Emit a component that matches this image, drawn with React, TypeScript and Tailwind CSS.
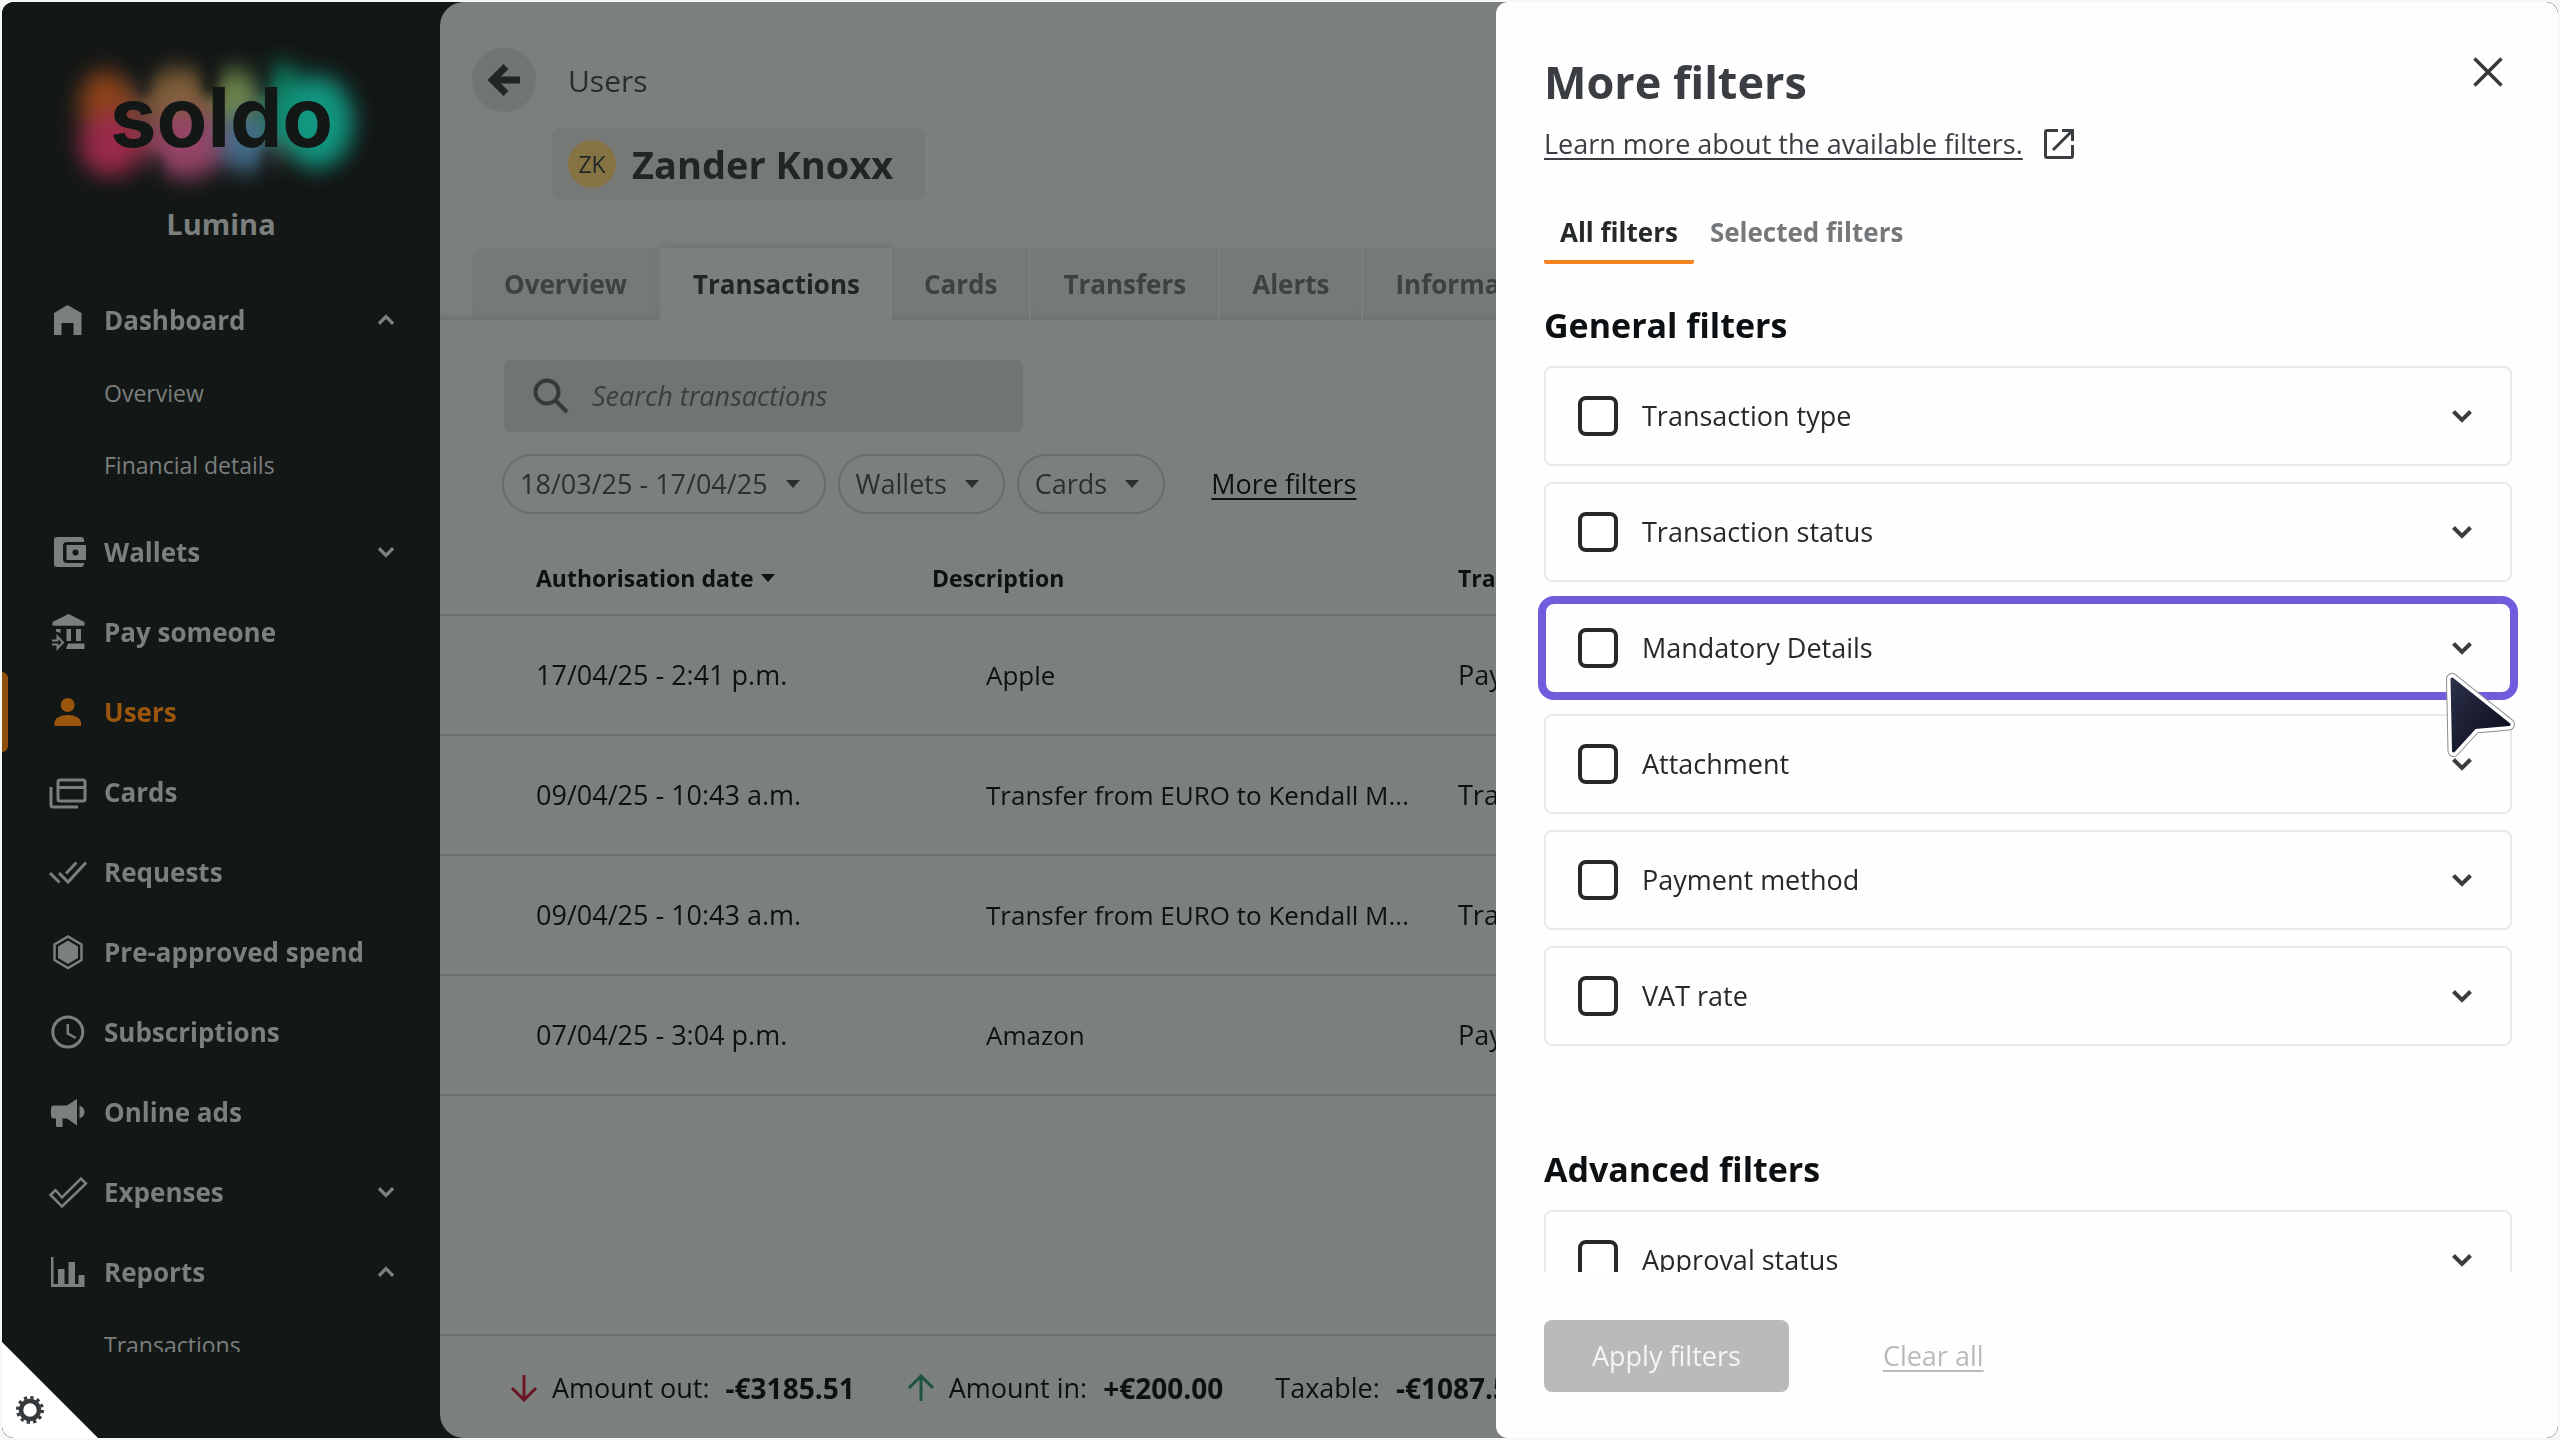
import type { ReactNode } from "react";

function Chevron({ up = false, className }: { up?: boolean; className: string }) {
  return (
    <svg viewBox="0 0 24 16" className={className} fill="none" stroke="currentColor" strokeWidth="4" aria-hidden="true">
      <path d={up ? "M3.500 12.500 12 4l8.500 8.500" : "M3.500 3.500 12 12l8.500-8.500"} />
    </svg>
  );
}

function Caret() {
  return (
    <svg viewBox="0 0 14 8" className="h-2 w-3.5" fill="currentColor" aria-hidden="true">
      <path d="M0 0h14L7 8z" />
    </svg>
  );
}

const icons: Record<string, ReactNode> = {
  home: <path fill="currentColor" d="M7 13 20.500 5l14 8v22h-8V23h-12v12H7z" />,
  wallet: (
    <g fill="currentColor">
      <path d="M10 5h24q3 0 3 3v2H20q-4 0-4 4v13q0 4 4 4h17v1q0 3-3 3H10q-3 0-3-3V8q0-3 3-3z" />
      <path fillRule="evenodd" d="M19.500 13H39v15H19.500zM28.500 17.500a3 3 0 1 0 0 6 3 3 0 0 0 0-6z" />
    </g>
  ),
  bank: (
    <g fill="currentColor">
      <path d="M5.500 10 21.500 2l16 8v3.700h-32zM19.500 17H24v12h-4.500zM29 17h5v12h-5zM9 17h4.500v4L9 19.500zM21 31.500h16.500V37H19z" />
      <path d="M5 28.500h5.500v-4l5.500 6-5.500 6v-4H5" fill="none" stroke="currentColor" strokeWidth="2" />
    </g>
  ),
  user: (
    <g fill="currentColor">
      <circle cx="20.700" cy="13" r="6.900" />
      <path d="M7.500 34v-3c0-5 6-8 13.200-8s13.300 3 13.300 8v3z" />
    </g>
  ),
  cards: (
    <g fill="none" stroke="currentColor" strokeWidth="3">
      <rect x="11" y="8" width="27" height="21" rx="2" />
      <path d="M11 15.500h27M4 15v18q0 2 2 2h25" />
    </g>
  ),
  requests: (
    <path fill="none" stroke="currentColor" strokeWidth="3" d="m3 21 9.500 9.500M12 21l9 9 18-19.500M29.500 10.500 19 21.500" />
  ),
  hexagon: (
    <g>
      <path fill="none" stroke="currentColor" strokeWidth="2.500" d="m21 4.500 13.500 8v15.500L21 36 7.500 28V12.500z" />
      <path fill="currentColor" d="m21 8.500 10 6V26l-10 6-10-6V14.500z" />
    </g>
  ),
  clock: (
    <g fill="none" stroke="currentColor">
      <circle cx="20.800" cy="20" r="15" strokeWidth="3" />
      <path strokeWidth="2.500" d="M20.800 12v9.500l8 4.500" />
    </g>
  ),
  ads: (
    <g fill="currentColor">
      <path d="M7 13.500h13l10-6.500v26.500L20 26.500h-4.500V35H10q-1 0-1-1.500v-7H7q-3 0-3-3v-7q0-3 3-3z" />
      <path d="M32.500 13.500q5 2 5 6.500t-5 6.500z" />
    </g>
  ),
  check: (
    <path fill="none" stroke="currentColor" strokeWidth="2.500" d="m3.500 23 5-5 6.500 7.500L34 6.500l5 5L15 34.500z" />
  ),
  chart: (
    <path fill="currentColor" d="M4 5h2.500v27H11V17h6.500v15h4V10H28v22h3.500v-9h6v12H4z" />
  ),
};

type NavItem = { label: string; icon: string; open?: boolean; children?: string[]; active?: boolean };

const nav: NavItem[] = [
  { label: "Dashboard", icon: "home", open: true, children: ["Overview", "Financial details"] },
  { label: "Wallets", icon: "wallet", open: false },
  { label: "Pay someone", icon: "bank" },
  { label: "Users", icon: "user", active: true },
  { label: "Cards", icon: "cards" },
  { label: "Requests", icon: "requests" },
  { label: "Pre-approved spend", icon: "hexagon" },
  { label: "Subscriptions", icon: "clock" },
  { label: "Online ads", icon: "ads" },
  { label: "Expenses", icon: "check", open: false },
  { label: "Reports", icon: "chart", open: true, children: ["Transactions"] },
];

function Logo() {
  return (
    <svg viewBox="0 0 320 160" className="h-40 w-80" role="img" aria-label="soldo">
      <defs>
        <filter id="glow" x="-30%" y="-30%" width="160%" height="160%" colorInterpolationFilters="sRGB">
          <feGaussianBlur stdDeviation="11" />
        </filter>
        <filter id="soft" x="-200%" y="-30%" width="500%" height="160%" colorInterpolationFilters="sRGB">
          <feGaussianBlur stdDeviation="6" />
        </filter>
      </defs>
      <g filter="url(#glow)">
        <rect x="28" y="46" width="256" height="72" rx="30" fill="#5a4034" />
        <ellipse cx="44" cy="68" rx="26" ry="36" fill="#8c431a" />
        <ellipse cx="50" cy="106" rx="32" ry="32" fill="#9a2a4a" />
        <ellipse cx="118" cy="62" rx="32" ry="32" fill="#80603a" />
        <ellipse cx="126" cy="106" rx="38" ry="34" fill="#944466" />
        <ellipse cx="174" cy="62" rx="20" ry="32" fill="#6c884c" />
        <ellipse cx="184" cy="104" rx="26" ry="30" fill="#436c88" />
        <ellipse cx="222" cy="66" rx="20" ry="42" fill="#0d7a5c" />
        <ellipse cx="256" cy="84" rx="36" ry="46" fill="#129680" />
      </g>
      <g filter="url(#soft)" fill="#131716">
        <rect x="76" y="22" width="12" height="36" opacity="0.8" />
        <rect x="142" y="20" width="14" height="38" />
        <rect x="198" y="22" width="10" height="34" opacity="0.8" />
        <rect x="202" y="110" width="8" height="36" opacity="0.8" />
        <rect x="92" y="118" width="8" height="30" opacity="0.8" />
      </g>
      <text x="49" y="109" fill="#131716" fontFamily="Inter, sans-serif" fontWeight="700" fontSize="83">
        soldo
      </text>
    </svg>
  );
}

function Sidebar() {
  return (
    <aside className="flex w-[438px] shrink-0 flex-col bg-[#131716] text-[#7b7f7e]">
      <div className="flex h-[278px] flex-col items-center pt-9">
        <Logo />
        <p className="mt-1.5 text-[29px] leading-10 font-bold">Lumina</p>
      </div>
      <nav className="min-h-0 flex-1 overflow-hidden">
        <ul>
          {nav.map((item) => (
            <li key={item.label}>
              <a
                href="#"
                className={
                  item.active
                    ? "relative flex h-20 items-center gap-[15px] pl-[45px] text-[#9b560e]"
                    : "relative flex h-20 items-center gap-[15px] pl-[45px]"
                }
              >
                {item.active && <span className="absolute inset-y-0 left-0 w-1.5 rounded-r-md bg-[#8f4f0c]" />}
                <svg viewBox="0 0 42 40" className="h-10 w-[42px]" aria-hidden="true">
                  {icons[item.icon]}
                </svg>
                <span className="flex-1 text-[26px] leading-10 font-bold whitespace-nowrap">{item.label}</span>
                {item.open !== undefined && <Chevron up={item.open} className="mr-11 h-3.5 w-5" />}
              </a>
              {item.children && (
                <ul className="flex flex-col gap-1.5 pb-3.5">
                  {item.children.map((child) => (
                    <li key={child}>
                      <a href="#" className="flex h-[66px] items-center pl-[102px] text-[23px]">
                        {child}
                      </a>
                    </li>
                  ))}
                </ul>
              )}
            </li>
          ))}
        </ul>
      </nav>
      <div className="h-[86px] shrink-0" />
    </aside>
  );
}

const tabs = ["Overview", "Transactions", "Cards", "Transfers", "Alerts", "Information"];

const rows = [
  ["17/04/25 - 2:41 p.m.", "Apple", "Payment"],
  ["09/04/25 - 10:43 a.m.", "Transfer from EURO to Kendall M...", "Transfer"],
  ["09/04/25 - 10:43 a.m.", "Transfer from EURO to Kendall M...", "Transfer"],
  ["07/04/25 - 3:04 p.m.", "Amazon", "Payment"],
];

function Pill({ children }: { children: string }) {
  return (
    <button
      type="button"
      className="flex h-[60px] items-center gap-[18px] rounded-full border-2 border-[#686d6c] pr-6 pl-4 text-[27px] whitespace-nowrap text-[#2a302e]"
    >
      {children}
      <Caret />
    </button>
  );
}

function Amount({ label, value, arrow }: { label: string; value: string; arrow?: "down" | "up" }) {
  return (
    <div className="flex items-center">
      {arrow && (
        <svg
          viewBox="0 0 28 28"
          className={arrow === "down" ? "mr-3.5 size-7 text-[#6b1526]" : "mr-3.5 size-7 text-[#1b5240]"}
          fill="none"
          stroke="currentColor"
          strokeWidth="3"
          aria-hidden="true"
        >
          <path d={arrow === "down" ? "M14 1v24M2 14l12 12 12-12" : "M14 27V3M2 14 14 2l12 12"} />
        </svg>
      )}
      <span className="mr-4">{label}</span>
      <strong className="text-[28px] font-bold">{value}</strong>
    </div>
  );
}

function Main() {
  return (
    <main className="flex min-w-0 flex-1 flex-col overflow-hidden rounded-l-[24px] bg-[#7b807e] text-[#0d1110]">
      <header className="flex h-[246px] shrink-0 gap-4 pt-[46px] pl-8">
        <button
          type="button"
          aria-label="Back"
          className="flex size-16 items-center justify-center rounded-full bg-[#6f7575] text-[#1f2624]"
        >
          <svg viewBox="0 0 32 32" className="size-8" fill="none" stroke="currentColor" strokeWidth="7" aria-hidden="true">
            <path d="M32 16H5M18 2.500 4.500 16 18 29.500" />
          </svg>
        </button>
        <div>
          <p className="flex h-16 items-center pl-4 text-[30px] text-[#262d2b]">Users</p>
          <div className="mt-4 flex h-[72px] items-center gap-4 rounded-lg bg-[#757a79] pr-8 pl-4 text-[#1f2624]">
            <span className="flex size-12 items-center justify-center rounded-full bg-[#857344] text-[23px]">ZK</span>
            <h1 className="text-[38px] font-bold whitespace-nowrap">Zander Knoxx</h1>
          </div>
        </div>
      </header>
      <div className="flex h-[72px] shrink-0 pl-8 shadow-[inset_0_-8px_8px_-6px_#6a6f6e]">
        {tabs.map((tab) => (
          <button
            key={tab}
            type="button"
            className={
              tab === "Transactions"
                ? "bg-[#7b807e] px-8 text-[26px] font-bold text-[#1f2624] shadow-[0_-4px_6px_#717675]"
                : "border-r-2 border-[#7a7f7d] bg-[#757a79] px-8 text-[26px] font-bold text-[#3c4240] shadow-[inset_0_-8px_8px_-6px_#6a6f6e] first:rounded-tl-xl"
            }
          >
            {tab}
          </button>
        ))}
      </div>
      <div className="flex flex-col gap-[22px] pt-10 pl-16">
        <label className="flex h-[72px] w-[519px] items-center gap-[22px] rounded-md bg-[#6f7575] pl-7 text-[#333a38]">
          <svg viewBox="0 0 38 38" className="size-[38px]" fill="none" stroke="currentColor" strokeWidth="4" aria-hidden="true">
            <circle cx="15" cy="15" r="11.500" />
            <path d="m23 23 12 12" />
          </svg>
          <input
            type="text"
            aria-label="Search transactions"
            placeholder="Search transactions"
            className="w-[380px] bg-transparent text-[27px] italic outline-none placeholder:text-[#383f3d]"
          />
        </label>
        <div className="-ml-0.5 flex items-center gap-3">
          <Pill>18/03/25 - 17/04/25</Pill>
          <Pill>Wallets</Pill>
          <Pill>Cards</Pill>
          <a href="#" className="ml-[34px] text-[27px] font-medium underline decoration-2 underline-offset-4">
            More filters
          </a>
        </div>
      </div>
      <table className="mt-[22px] w-full table-fixed text-left">
        <thead>
          <tr className="h-[79px] border-b-2 border-[#6d7271] text-[23px]">
            <th className="w-[492px] pt-1.5 pl-24 font-bold">
              <span className="flex items-center gap-2">
                Authorisation date <Caret />
              </span>
            </th>
            <th className="w-[526px] pt-1.5 font-bold">Description</th>
            <th className="pt-1.5 font-bold">Transaction type</th>
          </tr>
        </thead>
        <tbody>
          {rows.map(([date, description, type], i) => (
            <tr key={i} className="h-[120px] border-b-2 border-[#6d7271] text-[27px] whitespace-nowrap">
              <td className="pl-24">{date}</td>
              <td className="pl-[54px] text-[26px]">{description}</td>
              <td>{type}</td>
            </tr>
          ))}
        </tbody>
      </table>
      <footer className="mt-auto flex h-[104px] shrink-0 items-center gap-[52px] border-t-2 border-[#6d7271] pt-0.5 pl-[70px] text-[27px] whitespace-nowrap">
        <Amount label="Amount out:" value="-€3185.51" arrow="down" />
        <Amount label="Amount in:" value="+€200.00" arrow="up" />
        <Amount label="Taxable:" value="-€1087.51" />
      </footer>
    </main>
  );
}

function Cursor() {
  const shape = "M8 9 L65 54.500 L31 57.500 L9.500 81 Z";
  return (
    <svg viewBox="0 0 76 92" className="absolute -right-2.5 top-[70px] z-10 h-[92px] w-[76px]" aria-hidden="true">
      <defs>
        <linearGradient id="cursor" x1="0" y1="0" x2="1" y2="1">
          <stop offset="0" stopColor="#2c3048" />
          <stop offset="1" stopColor="#070a18" />
        </linearGradient>
      </defs>
      <g strokeLinejoin="round">
        <path d={shape} fill="#8a8c94" stroke="#8a8c94" strokeWidth="12" />
        <path d={shape} fill="#fff" stroke="#fff" strokeWidth="10" />
        <path d={shape} fill="url(#cursor)" stroke="url(#cursor)" strokeWidth="3" />
      </g>
    </svg>
  );
}

function FilterCard({ label, highlighted = false }: { label: string; highlighted?: boolean }) {
  return (
    <div className="relative flex h-[100px] shrink-0 items-center rounded-lg border-2 border-[#e8e9e9] pr-9 pl-8">
      {highlighted && (
        <>
          <span className="pointer-events-none absolute -inset-x-2 -inset-y-1 rounded-2xl border-8 border-[#725cdb]" />
          <Cursor />
        </>
      )}
      <label className="flex flex-1 items-center gap-6 text-[27px] font-medium text-[#26292a]">
        <input type="checkbox" className="size-10 appearance-none rounded-lg border-4 border-[#26292a] bg-white" />
        {label}
      </label>
      <button type="button" aria-label={"Expand " + label} className="text-[#3a3d3f]">
        <Chevron className="h-4 w-6" />
      </button>
    </div>
  );
}

const general = [
  "Transaction type",
  "Transaction status",
  "Mandatory Details",
  "Attachment",
  "Payment method",
  "VAT rate",
];

function FilterPanel() {
  return (
    <section className="absolute inset-y-0 right-0 z-10 flex w-[1062px] flex-col rounded-xl bg-[#fefefe] text-[#3a3d42]">
      <div className="flex min-h-0 flex-1 flex-col overflow-hidden pr-[46px] pl-12">
        <div className="flex items-start justify-between pt-[50px]">
          <h2 className="text-[45px] leading-[60px] font-bold">More filters</h2>
          <button type="button" aria-label="Close" className="mt-1 mr-2 text-[#36393c]">
            <svg viewBox="0 0 32 32" className="size-8" fill="none" stroke="currentColor" strokeWidth="3.500" aria-hidden="true">
              <path d="m2.500 2.500 27 27M29.500 2.500l-27 27" />
            </svg>
          </button>
        </div>
        <a href="#" className="mt-3 flex items-center gap-5 text-[27px] leading-10 font-medium">
          <span className="underline decoration-2 underline-offset-4">Learn more about the available filters.</span>
          <svg viewBox="0 0 32 32" className="size-8" fill="none" stroke="currentColor" strokeWidth="3" aria-hidden="true">
            <path d="M15 2.500H4q-1.500 0-1.500 1.500v24q0 1.500 1.500 1.500h24q1.500 0 1.500-1.500V17M19 2.500h10.500V13M29 3 10 22" />
          </svg>
        </a>
        <div className="mt-[38px] flex h-[62px] items-start text-[26px] leading-[60px] font-bold">
          <button type="button" className="h-[62px] rounded-b-xs border-b-4 border-[#f58220] px-4 text-[#26292a]">
            All filters
          </button>
          <button type="button" className="h-[62px] border-b-4 border-transparent px-4 text-[#75787a]">
            Selected filters
          </button>
        </div>
        <h3 className="mt-9 text-[34px] leading-[50px] font-bold text-[#0d1012]">General filters</h3>
        <div className="mt-4 flex flex-col gap-4">
          {general.map((label) => (
            <FilterCard key={label} label={label} highlighted={label === "Mandatory Details"} />
          ))}
        </div>
        <h3 className="mt-[98px] text-[34px] leading-[50px] font-bold text-[#0d1012]">Advanced filters</h3>
        <div className="mt-4 flex flex-col">
          <FilterCard label="Approval status" />
        </div>
      </div>
      <div className="flex h-[166px] shrink-0 items-start pt-12 pl-12 text-[27px]">
        <button type="button" disabled className="h-[72px] rounded-lg bg-[#b8bbba] px-12 font-medium text-[#f4f5f5]">
          Apply filters
        </button>
        <button type="button" disabled className="ml-[94px] h-[72px] font-medium text-[#b8bbba] underline decoration-2 underline-offset-4">
          Clear all
        </button>
      </div>
    </section>
  );
}

export default function App() {
  return (
    <div className="h-screen bg-[#f6f7f7] p-0.5 font-['Open_Sans',sans-serif]">
      <div className="relative flex h-full overflow-hidden rounded-xl bg-[#131716]">
        <Sidebar />
        <Main />
        <FilterPanel />
        <button
          type="button"
          aria-label="Settings"
          className="absolute bottom-0 left-0 z-20 size-24 bg-white text-[#36393c] [clip-path:polygon(0_0,100%_100%,0_100%)]"
        >
          <svg viewBox="0 0 28 28" className="absolute bottom-3.5 left-3.5 size-7" fill="none" stroke="currentColor" aria-hidden="true">
            <circle cx="14" cy="14" r="9" strokeWidth="4.500" />
            <circle cx="14" cy="14" r="12.500" strokeWidth="3" strokeDasharray="3.270 3.270" />
          </svg>
        </button>
      </div>
    </div>
  );
}
